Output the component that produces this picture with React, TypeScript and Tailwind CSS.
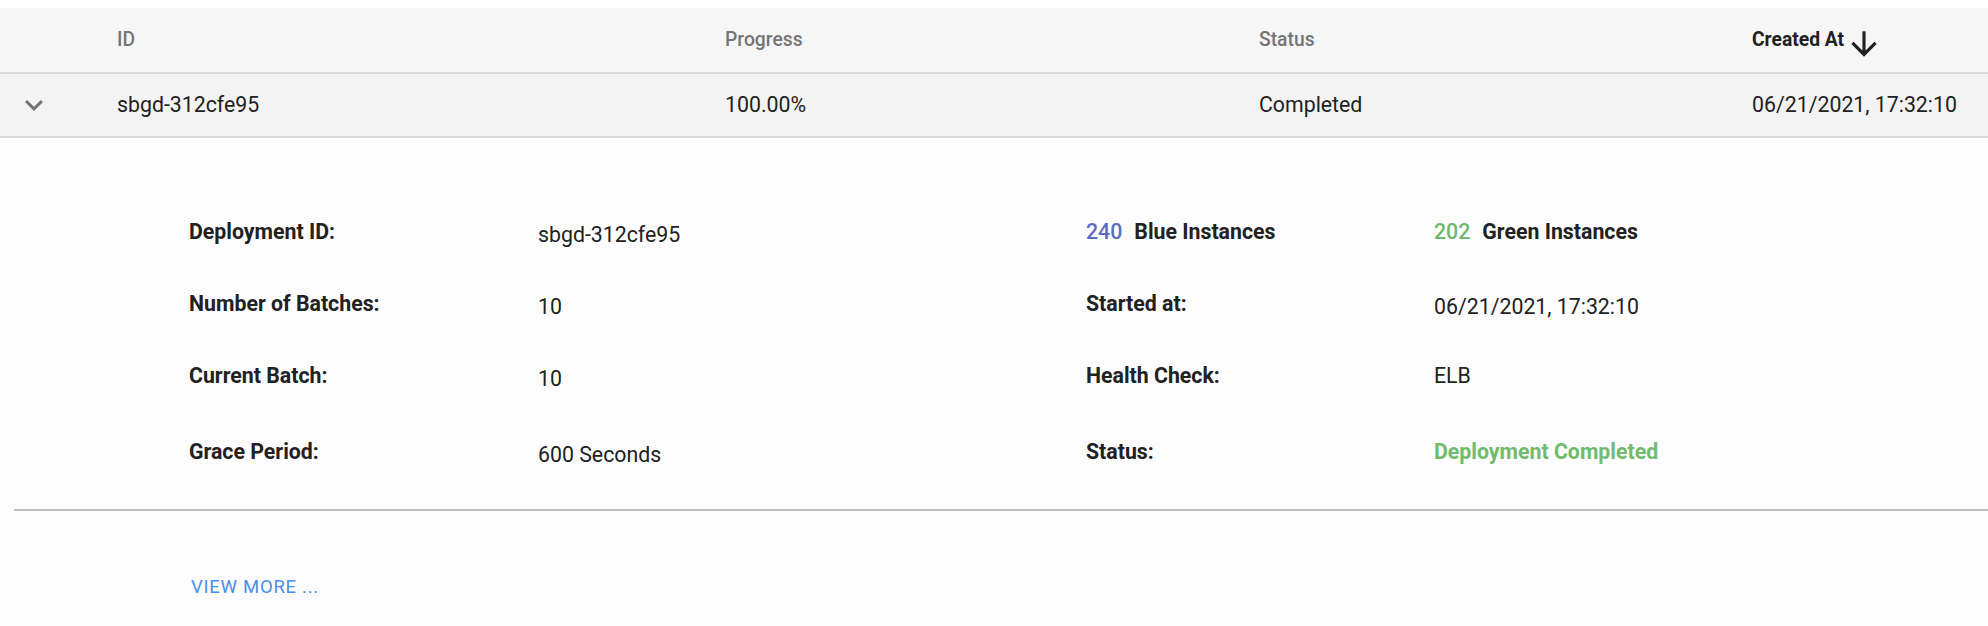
import React from "react";

const font = "font-['Roboto','Liberation_Sans',sans-serif]";

function ChevronDown() {
  return (
    <svg className="w-[36px] h-[36px] text-[#757575]" viewBox="0 0 24 24" fill="currentColor">
      <path d="M16.59 8.59L12 13.17 7.41 8.59 6 10l6 6 6-6z" />
    </svg>
  );
}

function ArrowDown() {
  return (
    <svg className="w-[38px] h-[38px] text-[#212121] mt-[8px] ml-[1px]" viewBox="0 0 24 24" fill="currentColor">
      <path d="M20 12l-1.41-1.41L13 16.17V4h-2v12.17l-5.58-5.59L4 12l8 8 8-8z" />
    </svg>
  );
}

const details = [
  { label: "Deployment ID:", value: "sbgd-312cfe95", h: "h-[72px]" },
  { label: "Number of Batches:", value: "10", h: "h-[72px]" },
  { label: "Current Batch:", value: "10", h: "h-[72px]" },
  { label: "Grace Period:", value: "600 Seconds", h: "h-[80px]" },
];

export default function App() {
  return (
    <div className={`${font} w-full h-[626px] bg-white text-[#212121] overflow-hidden`}>
      <div className="h-[8px] bg-white" />

      {/* table header */}
      <div className="grid grid-cols-[117px_608px_534px_493px_1fr] items-center h-[66px] bg-[#f6f6f6] border-b-2 border-[#d9d9d9] text-[19.3px] font-medium text-[#757575]">
        <div />
        <div>ID</div>
        <div>Progress</div>
        <div>Status</div>
        <div className="flex items-center font-bold text-[#212121]">
          <span>Created At</span>
          <ArrowDown />
        </div>
      </div>

      {/* row */}
      <div className="grid grid-cols-[117px_608px_534px_493px_1fr] items-center h-[64px] bg-[#f3f3f3] border-b-2 border-[#d9d9d9] text-[21.3px]">
        <div className="pl-[16px] flex items-center">
          <ChevronDown />
        </div>
        <div>sbgd-312cfe95</div>
        <div>100.00%</div>
        <div>Completed</div>
        <div>06/21/2021, 17:32:10</div>
      </div>

      {/* expanded details */}
      <div className="bg-[#fcfcfc] h-[488px] pt-[58px]">
        <div className="grid grid-cols-[189px_349px_548px_348px_1fr] text-[21.3px]">
          {details.map((d, i) => (
            <React.Fragment key={d.label}>
              <div className={d.h} />
              <div className={`${d.h} flex items-center font-bold`}>{d.label}</div>
              <div className={`${d.h} flex items-center pt-[6px]`}>{d.value}</div>
              {i === 0 && (
                <>
                  <div className={`${d.h} flex items-center gap-[12px]`}>
                    <span className="font-medium text-[#5c6bc0]">240</span>
                    <span className="font-bold">Blue Instances</span>
                  </div>
                  <div className={`${d.h} flex items-center gap-[12px]`}>
                    <span className="font-medium text-[#6cb96c]">202</span>
                    <span className="font-bold">Green Instances</span>
                  </div>
                </>
              )}
              {i === 1 && (
                <>
                  <div className={`${d.h} flex items-center font-bold`}>Started at:</div>
                  <div className={`${d.h} flex items-center pt-[6px]`}>06/21/2021, 17:32:10</div>
                </>
              )}
              {i === 2 && (
                <>
                  <div className={`${d.h} flex items-center font-bold`}>Health Check:</div>
                  <div className={`${d.h} flex items-center`}>ELB</div>
                </>
              )}
              {i === 3 && (
                <>
                  <div className={`${d.h} flex items-center font-bold`}>Status:</div>
                  <div className={`${d.h} flex items-center font-bold text-[#71bb6e]`}>Deployment Completed</div>
                </>
              )}
            </React.Fragment>
          ))}
        </div>

        <div className="ml-[14px] mt-[17px] h-[2px] bg-[#bdbdbd]" />

        <div className="pl-[191px] mt-[64px]">
          <button className="text-[18.5px] leading-[24px] tracking-[0.04em] text-[#4a8fe8] uppercase">
            View more ...
          </button>
        </div>
      </div>
    </div>
  );
}
